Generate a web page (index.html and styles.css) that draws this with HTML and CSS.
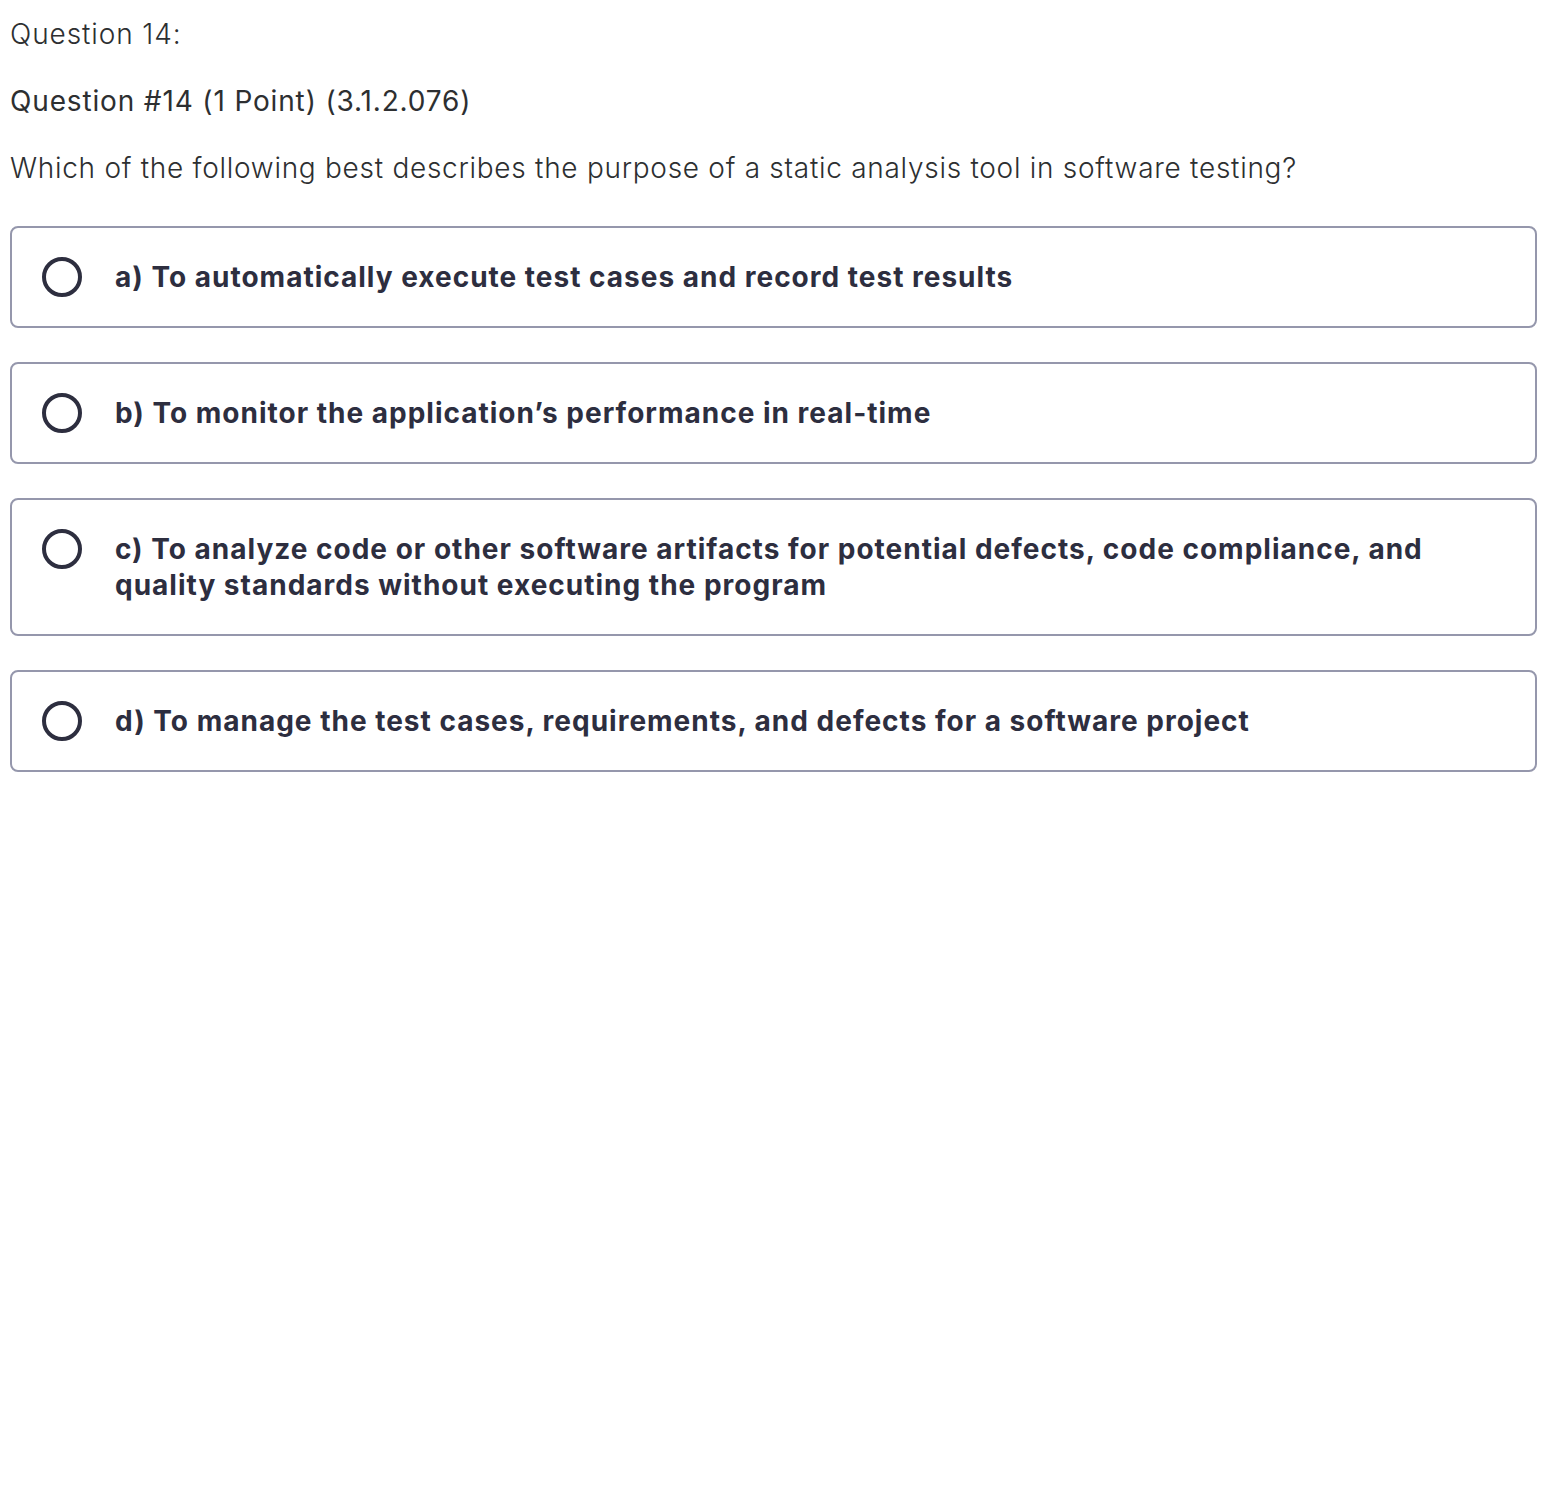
FILE: index.html
```html
<!DOCTYPE html>
<html>
<head>
<meta charset="utf-8">
<link rel="stylesheet" href="styles.css">
</head>
<body>
<div class="page">
  <div class="q-label">Question 14:</div>
  <div class="q-title">Question #14 (1 Point) (3.1.2.076)</div>
  <div class="q-text">Which of the following best describes the purpose of a static analysis tool in software testing?</div>
  <div class="options">
    <label class="option"><span class="radio"></span><span class="opt-text">a) To automatically execute test cases and record test results</span></label>
    <label class="option"><span class="radio"></span><span class="opt-text">b) To monitor the application’s performance in real-time</span></label>
    <label class="option"><span class="radio"></span><span class="opt-text">c) To analyze code or other software artifacts for potential defects, code compliance, and quality standards without executing the program</span></label>
    <label class="option"><span class="radio"></span><span class="opt-text">d) To manage the test cases, requirements, and defects for a software project</span></label>
  </div>
</div>
</body>
</html>
```

FILE: styles.css
```css
html, body {
  margin: 0;
  padding: 0;
  background: #ffffff;
}
.page {
  padding: 14px 15px 0 10px;
  font-family: Inter, "Noto Sans", sans-serif;
  color: #2d2f31;
}
.q-label {
  font-size: 28px;
  font-weight: 300;
  line-height: 40px;
  letter-spacing: 0.9px;
}
.q-title {
  margin-top: 27px;
  font-size: 28px;
  font-weight: 400;
  line-height: 40px;
  letter-spacing: 0.85px;
}
.q-text {
  margin-top: 27px;
  font-size: 28px;
  font-weight: 300;
  line-height: 40px;
  letter-spacing: 0.72px;
}
.options {
  margin-top: 38px;
  display: flex;
  flex-direction: column;
  gap: 34px;
}
.option {
  display: flex;
  align-items: flex-start;
  gap: 33px;
  box-sizing: border-box;
  padding: 31px 30px 31px 30px;
  border: 2px solid #9597ac;
  border-radius: 8px;
}
.radio {
  flex: 0 0 auto;
  width: 40px;
  height: 40px;
  margin: -2px 0;
  box-sizing: border-box;
  border: 4px solid #2d2e3f;
  border-radius: 50%;
}
.opt-text {
  font-size: 28px;
  font-weight: 700;
  line-height: 36px;
  letter-spacing: 1px;
  color: #2d2e3f;
}
```
